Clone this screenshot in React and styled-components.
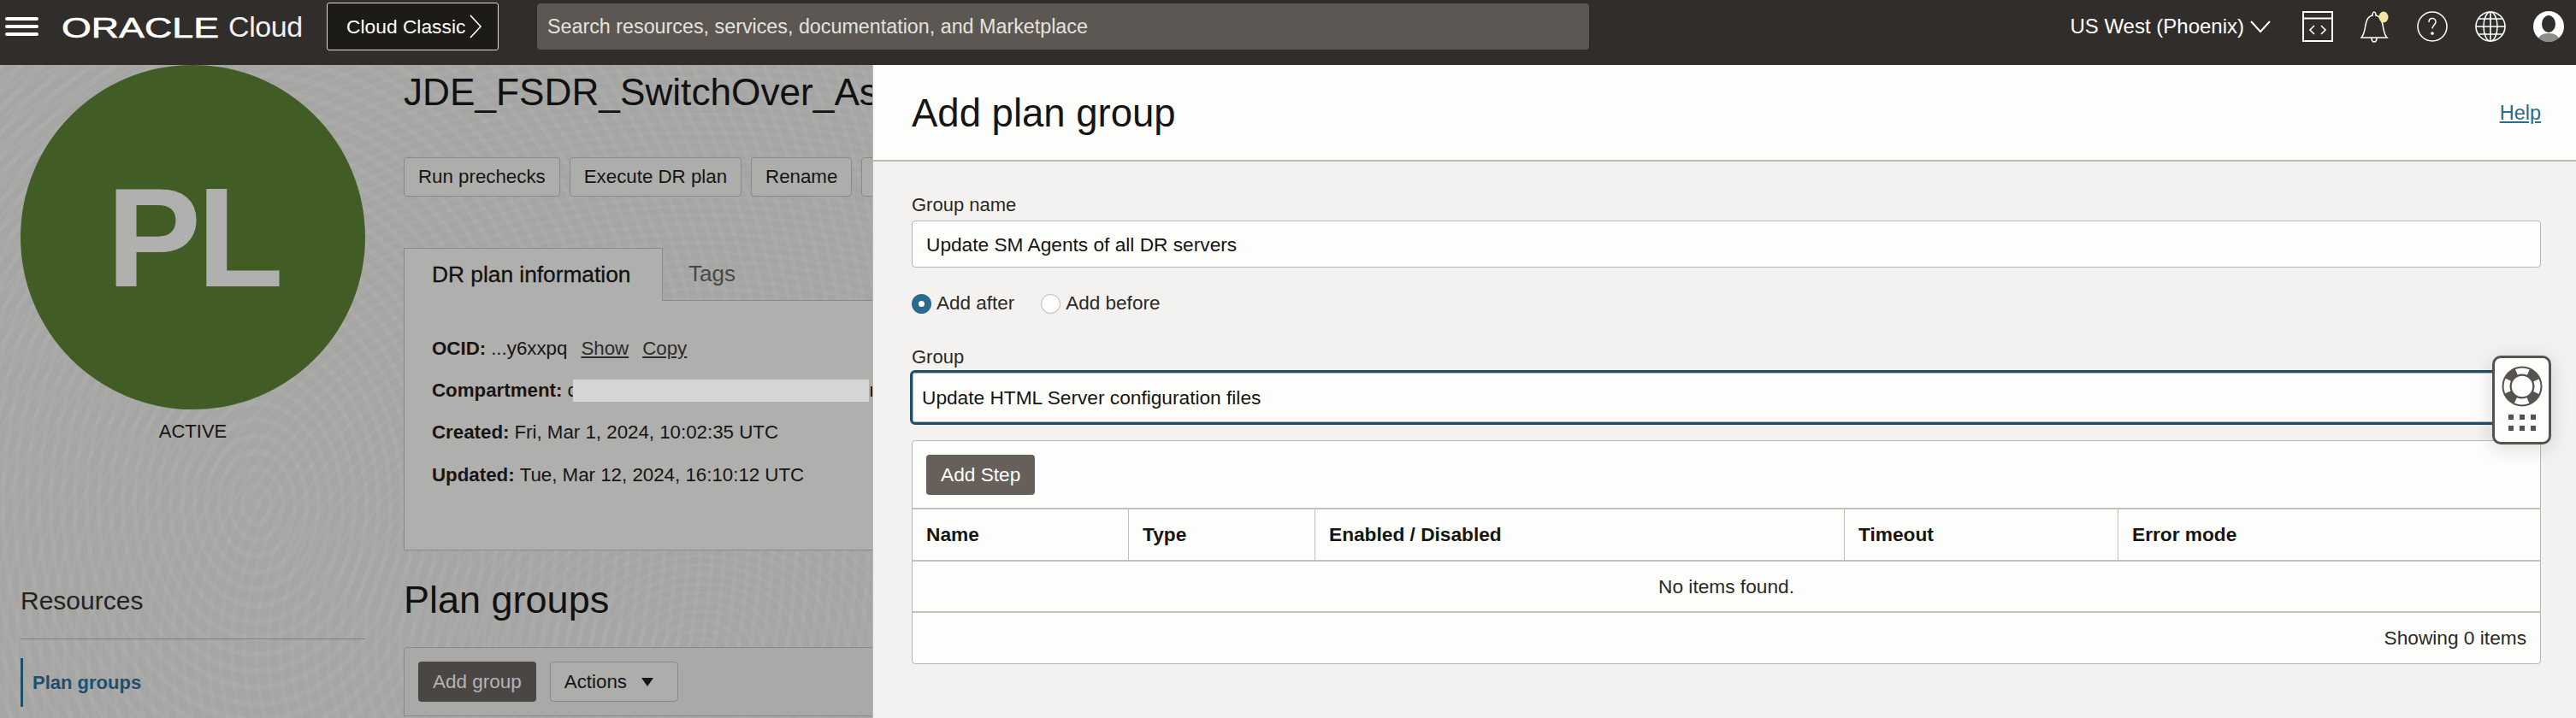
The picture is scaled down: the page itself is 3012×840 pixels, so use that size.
import React from 'react';
import styled, { createGlobalStyle } from 'styled-components';

const GlobalStyle = createGlobalStyle`
  html, body {
    margin: 0;
    padding: 0;
    width: 3012px;
    height: 840px;
    overflow: hidden;
    font-family: "Liberation Sans", Arial, sans-serif;
    font-size: 22.7px;
    color: #161513;
  }
  * { box-sizing: border-box; }
`;

const Shell = styled.div`
  position: relative;
  width: 3012px;
  height: 840px;
  overflow: hidden;
  background-color: #a9a9a7;
  background-image:
    repeating-radial-gradient(ellipse 190px 260px at 300px 590px, rgba(255,255,255,.018) 0 5px, rgba(0,0,0,.012) 5px 14px),
    repeating-radial-gradient(ellipse 260px 200px at 820px 760px, rgba(255,255,255,.015) 0 5px, rgba(0,0,0,.012) 5px 14px);
`;

/* top bar */
const TopBar = styled.header`
  display: flex;
  align-items: center;
  height: 76px;
  background: #312d2a;
  color: #fff;
  padding: 0 14px 14px 6px;
`;
const Burger = styled.div`
  display: flex;
  flex-direction: column;
  gap: 5px;
  width: 39px;
  margin-right: 27px;
  span { display: block; height: 4px; border-radius: 2px; background: #fff; }
`;
const LogoText = styled.svg`
  display: block;
  width: 184px;
  height: 30px;
  margin-right: 11px;
  overflow: visible;
  text {
    font-family: "Liberation Sans", sans-serif;
    font-size: 33px;
    fill: #fff;
    stroke: #fff;
    stroke-width: 0.6px;
  }
`;
const CloudWord = styled.span`
  font-size: 34px;
  width: 115px;
  color: #f2f2f1;
  letter-spacing: -0.4px;
`;
const ClassicButton = styled.div`
  display: flex;
  align-items: center;
  gap: 4px;
  width: 201px;
  height: 56px;
  margin-right: 45px;
  padding-left: 22px;
  font-size: 22.8px;
  background: #1c1b17;
  border: 1px solid #dedcd9;
  border-radius: 3px;
`;
const SearchBox = styled.div`
  display: flex;
  align-items: center;
  width: 1230px;
  height: 54px;
  padding-left: 12px;
  background: #5c5752;
  border-radius: 4px;
  color: #e4e2df;
  font-size: 23.3px;
`;
const RegionPicker = styled.div`
  display: flex;
  align-items: center;
  gap: 7px;
  margin-left: auto;
  margin-right: 37px;
  font-size: 24px;
`;
const IconRow = styled.div`
  display: flex;
  align-items: center;
  gap: 32px;
  svg { display: block; }
`;

/* page behind the panel */
const PageBody = styled.div`
  display: flex;
  align-items: flex-start;
  height: 764px;
`;
const Sidebar = styled.aside`
  flex: none;
  width: 472px;
  padding-left: 24px;
`;
const SideInner = styled.div`
  width: 403px;
`;
const Avatar = styled.div`
  display: flex;
  align-items: center;
  justify-content: center;
  width: 403px;
  height: 403px;
  border-radius: 50%;
  background: #415c24;
  color: #b0b0ae;
  font-size: 166px;
  font-weight: 700;
  letter-spacing: -5px;
`;
const StateLabel = styled.div`
  margin-top: 11px;
  line-height: 30px;
  text-align: center;
  font-size: 22px;
`;
const ResourcesTitle = styled.div`
  margin-top: 163px;
  padding-bottom: 24px;
  line-height: 40px;
  font-size: 30px;
  color: #252321;
  border-bottom: 1px solid #827f7c;
`;
const NavItem = styled.div`
  display: flex;
  align-items: center;
  height: 57px;
  margin-top: 22px;
  padding-left: 11px;
  border-left: 3px solid #1f4e6e;
  color: #1f4e6e;
  font-weight: 700;
  font-size: 22px;
`;
const Content = styled.main`
  flex: none;
  width: 2540px;
`;
const PageTitle = styled.h1`
  margin: 0;
  line-height: 64px;
  font-size: 44.2px;
  font-weight: 400;
  color: #111;
  white-space: nowrap;
`;
const ActionRow = styled.div`
  display: flex;
  gap: 11px;
  margin-top: 44px;
`;
const GhostButton = styled.div`
  display: flex;
  align-items: center;
  gap: 17px;
  height: ${p => p.$height || 46}px;
  min-width: ${p => p.$minWidth || 0}px;
  padding: 0 ${p => p.$padRight || 16}px 0 16px;
  background: #adadab;
  border: 1px solid #8a8987;
  border-radius: 4px;
  font-size: 22.3px;
  white-space: nowrap;
`;
const TabRow = styled.div`
  display: flex;
  align-items: stretch;
  height: 62px;
  margin-top: 60px;
`;
const ActiveTab = styled.div`
  display: flex;
  align-items: center;
  width: 303px;
  padding-left: 32px;
  font-size: 26.3px;
  color: #111;
  background: #afafad;
  border: 1px solid #8a8987;
  border-bottom: 0;
  -webkit-text-stroke: 0.3px #111;
`;
const IdleTab = styled.div`
  display: flex;
  align-items: center;
  flex: 1;
  padding-left: 30px;
  font-size: 26px;
  color: #4a4744;
  border-bottom: 1px solid #8a8987;
`;
const InfoPanel = styled.section`
  height: 292px;
  padding: 31px 0 0 32px;
  background: #afafad;
  border-left: 1px solid #8a8987;
  border-bottom: 1px solid #8a8987;
`;
const InfoRow = styled.div`
  display: flex;
  align-items: center;
  gap: 6px;
  height: 49.4px;
  font-size: 22.3px;
  white-space: nowrap;
  b { font-weight: 700; }
  u { margin-left: 10px; color: #2e2c2a; }
`;
const Redacted = styled.span`
  display: inline-block;
  width: 346px;
  height: 26px;
  margin: 0 -5px 0 -11px;
  background: #d5d5d5;
`;
const SectionTitle = styled.h2`
  margin: 26px 0 0;
  line-height: 64px;
  font-size: 45px;
  font-weight: 400;
  color: #111;
`;
const GroupsCard = styled.section`
  margin-top: 23px;
  padding: 16px;
  border: 1px solid #8a8987;
  border-radius: 4px 0 0 0;
  background: #a9a9a7;
`;
const GroupsToolbar = styled.div`
  display: flex;
  gap: 16px;
`;
const DarkButton = styled.div`
  display: flex;
  align-items: center;
  height: 47px;
  padding: 0 17px;
  border-radius: 4px;
  background: #4a4643;
  color: #b4b4b2;
  font-size: 22.5px;
`;
const Caret = styled.span`
  width: 0;
  height: 0;
  border-left: 7.5px solid transparent;
  border-right: 7.5px solid transparent;
  border-top: 10px solid #161513;
`;

/* slide-in panel */
const Panel = styled.aside`
  position: absolute;
  top: 76px;
  left: 1020px;
  right: 0;
  bottom: 0;
  background: #f3f2f0;
  border-left: 1px solid #b9b5b1;
`;
const PanelHeader = styled.div`
  display: flex;
  align-items: center;
  justify-content: space-between;
  height: 113px;
  padding: 2px 41px 0 45px;
  background: #fdfdfb;
  border-bottom: 2px solid #bfbcb8;
`;
const PanelTitle = styled.h2`
  margin: 0;
  font-size: 45.5px;
  font-weight: 400;
  color: #161513;
`;
const HelpLink = styled.a`
  font-size: 23.5px;
  color: #2a6a8f;
  text-decoration: underline;
`;
const PanelBody = styled.div`
  padding: 37px 41px 0 45px;
`;
const FieldLabel = styled.div`
  margin-top: ${p => p.$top || 0}px;
  line-height: 28px;
  font-size: 22px;
  color: #2b2927;
`;
const TextField = styled.div`
  display: flex;
  align-items: center;
  height: 55px;
  margin-top: 4px;
  padding: 2px 0 0 16px;
  background: #fdfdfb;
  border: 1px solid #b9b5b1;
  border-radius: 4px;
`;
const FocusField = styled(TextField)`
  width: 1909px;
  height: 64px;
  margin: 1px 0 0 -2px;
  padding: 0 0 0 11px;
  border: 3px solid #1d4f6b;
  box-shadow: inset 0 0 0 1px #b9b5b1;
  border-radius: 6px;
`;
const RadioRow = styled.div`
  display: flex;
  align-items: center;
  height: 28px;
  margin-top: 28px;
  font-size: 22.5px;
`;
const RadioMark = styled.span`
  flex: none;
  width: 23px;
  height: 23px;
  margin-right: 6px;
  border-radius: 50%;
  background: #fdfdfb;
  border: ${p => (p.$on ? '8px solid #2a6a8f' : '1px solid #b9b5b1')};
`;
const RadioText = styled.span`
  margin-right: 31px;
  color: #2b2927;
`;
const StepsCard = styled.section`
  margin-top: 18px;
  height: 262px;
  background: #fdfdfb;
  border: 1px solid #b9b5b1;
  border-radius: 4px;
`;
const StepsToolbar = styled.div`
  display: flex;
  align-items: center;
  height: 80px;
  padding-left: 16px;
  border-bottom: 2px solid #c4c1bd;
`;
const PrimaryButton = styled.div`
  display: flex;
  align-items: center;
  height: 47px;
  padding: 0 17px;
  border-radius: 4px;
  background: #665f5a;
  color: #fff;
`;
const HeadRow = styled.div`
  display: grid;
  grid-template-columns: 253px 218px 619px 320px 1fr;
  height: 61px;
  border-bottom: 2px solid #c4c1bd;
`;
const HeadCell = styled.div`
  display: flex;
  align-items: center;
  padding-left: 16px;
  font-weight: 700;
  border-right: ${p => (p.$last ? '0' : '1px solid #c4c1bd')};
`;
const EmptyRow = styled.div`
  display: flex;
  align-items: center;
  justify-content: center;
  height: 60px;
  border-bottom: 2px solid #c4c1bd;
  color: #2b2927;
`;
const FootRow = styled.div`
  display: flex;
  align-items: center;
  justify-content: flex-end;
  height: 59px;
  padding-right: 16px;
  color: #2b2927;
`;

/* floating helper widget */
const HelperWidget = styled.div`
  position: absolute;
  top: 416px;
  left: 2914px;
  display: flex;
  flex-direction: column;
  align-items: center;
  width: 69px;
  height: 104px;
  padding-top: 9px;
  background: #fdfdfb;
  border: 3px solid #55524f;
  border-radius: 10px;
  box-shadow: 0 4px 24px rgba(0, 0, 0, .14);
  svg { display: block; }
`;
const DotGrid = styled.div`
  display: grid;
  grid-template-columns: repeat(3, 6px);
  gap: 7px;
  margin-top: 9px;
  span { height: 6px; background: #55524f; }
`;

const CodeIcon = () => (
  <svg width="36" height="36" viewBox="0 0 36 36" fill="none" stroke="#fff" strokeWidth="2">
    <rect x="1" y="1" width="34" height="34" />
    <path d="M1 8.500h34" />
    <path d="M14 17l-5 5 5 5M22 17l5 5-5 5" strokeWidth="1.6" />
  </svg>
);
const BellIcon = () => (
  <svg width="34" height="38" viewBox="0 0 34 38" fill="none" stroke="#fff" strokeWidth="1.6">
    <path d="M1 32c3-3 4-8 5-15 1-6 3-10 8-11 0-2 1-4 2-4s2 2 2 4c5 1 7 5 8 11 1 7 2 12 5 15z" />
    <path d="M13 32c0 3 1 5 3 5s3-2 3-5" />
    <ellipse cx="27" cy="8" rx="5.500" ry="6.500" fill="#f6e3a6" stroke="none" />
  </svg>
);
const HelpIcon = () => (
  <svg width="36" height="36" viewBox="0 0 36 36" fill="none" stroke="#fff" strokeWidth="1.5">
    <circle cx="18" cy="18" r="17" />
    <path d="M14 13c0-3 2-4.500 4-4.500s4 1.500 4 4c0 3.500-4 4-4 8" />
    <circle cx="18" cy="26" r="1.100" fill="#fff" />
  </svg>
);
const GlobeIcon = () => (
  <svg width="36" height="36" viewBox="0 0 36 36" fill="none" stroke="#fff" strokeWidth="1.6">
    <circle cx="18" cy="18" r="17" />
    <ellipse cx="18" cy="18" rx="8" ry="17" />
    <path d="M18 1v34M1 18h34M4 9h28M4 27h28" />
  </svg>
);
const UserIcon = () => (
  <svg width="36" height="36" viewBox="0 0 36 36">
    <circle cx="18" cy="18" r="18" fill="#fff" />
    <ellipse cx="18" cy="15" rx="8" ry="10" fill="#312d2a" />
    <path d="M6 32c2-5 7-6 12-6s10 1 12 6c-3 3-7 4-12 4s-9-1-12-4z" fill="#312d2a" opacity=".55" />
  </svg>
);
const LifeRing = () => (
  <svg width="48" height="48" viewBox="0 0 48 48">
    <circle cx="24" cy="24" r="23.500" fill="#55524f" />
    <circle cx="24" cy="24" r="18" fill="none" stroke="#fdfdfb" strokeWidth="7" strokeDasharray="15 13.270" strokeDashoffset="7.500" transform="rotate(-90 24 24)" />
    <circle cx="24" cy="24" r="13" fill="#fdfdfb" stroke="#55524f" strokeWidth="1.500" />
  </svg>
);

const stepColumns = ['Name', 'Type', 'Enabled / Disabled', 'Timeout', 'Error mode'];

export default function App() {
  return (
    <Shell>
      <GlobalStyle />
      <TopBar>
        <Burger><span /><span /><span /></Burger>
        <LogoText viewBox="0 0 184 30">
          <text x="0" y="28" textLength="184" lengthAdjust="spacingAndGlyphs">ORACLE</text>
        </LogoText>
        <CloudWord>Cloud</CloudWord>
        <ClassicButton>
          Cloud Classic
          <svg width="16" height="30" viewBox="0 0 16 30" fill="none" stroke="#fff" strokeWidth="1.6">
            <path d="M2 2l12 13L2 28" />
          </svg>
        </ClassicButton>
        <SearchBox>Search resources, services, documentation, and Marketplace</SearchBox>
        <RegionPicker>
          US West (Phoenix)
          <svg width="24" height="16" viewBox="0 0 24 16" fill="none" stroke="#fff" strokeWidth="2">
            <path d="M1 2l11 12L23 2" />
          </svg>
        </RegionPicker>
        <IconRow>
          <CodeIcon />
          <BellIcon />
          <HelpIcon />
          <GlobeIcon />
          <UserIcon />
        </IconRow>
      </TopBar>

      <PageBody>
        <Sidebar>
          <SideInner>
            <Avatar>PL</Avatar>
            <StateLabel>ACTIVE</StateLabel>
            <ResourcesTitle>Resources</ResourcesTitle>
            <NavItem>Plan groups</NavItem>
          </SideInner>
        </Sidebar>
        <Content>
          <PageTitle>JDE_FSDR_SwitchOver_Ascend</PageTitle>
          <ActionRow>
            <GhostButton>Run prechecks</GhostButton>
            <GhostButton>Execute DR plan</GhostButton>
            <GhostButton>Rename</GhostButton>
            <GhostButton $minWidth={120} />
          </ActionRow>
          <TabRow>
            <ActiveTab>DR plan information</ActiveTab>
            <IdleTab>Tags</IdleTab>
          </TabRow>
          <InfoPanel>
            <InfoRow><b>OCID:</b> ...y6xxpq <u>Show</u> <u>Copy</u></InfoRow>
            <InfoRow><b>Compartment:</b> c<Redacted />n</InfoRow>
            <InfoRow><b>Created:</b> Fri, Mar 1, 2024, 10:02:35 UTC</InfoRow>
            <InfoRow><b>Updated:</b> Tue, Mar 12, 2024, 16:10:12 UTC</InfoRow>
          </InfoPanel>
          <SectionTitle>Plan groups</SectionTitle>
          <GroupsCard>
            <GroupsToolbar>
              <DarkButton>Add group</DarkButton>
              <GhostButton $height={47} $padRight={28}>Actions <Caret /></GhostButton>
            </GroupsToolbar>
          </GroupsCard>
        </Content>
      </PageBody>

      <Panel>
        <PanelHeader>
          <PanelTitle>Add plan group</PanelTitle>
          <HelpLink>Help</HelpLink>
        </PanelHeader>
        <PanelBody>
          <FieldLabel>Group name</FieldLabel>
          <TextField>Update SM Agents of all DR servers</TextField>
          <RadioRow>
            <RadioMark $on />
            <RadioText>Add after</RadioText>
            <RadioMark />
            <RadioText>Add before</RadioText>
          </RadioRow>
          <FieldLabel $top={35}>Group</FieldLabel>
          <FocusField>Update HTML Server configuration files</FocusField>
          <StepsCard>
            <StepsToolbar>
              <PrimaryButton>Add Step</PrimaryButton>
            </StepsToolbar>
            <HeadRow>
              {stepColumns.map((c, i) => (
                <HeadCell key={c} $last={i === stepColumns.length - 1}>{c}</HeadCell>
              ))}
            </HeadRow>
            <EmptyRow>No items found.</EmptyRow>
            <FootRow>Showing 0 items</FootRow>
          </StepsCard>
        </PanelBody>
      </Panel>

      <HelperWidget>
        <LifeRing />
        <DotGrid>
          <span /><span /><span /><span /><span /><span />
        </DotGrid>
      </HelperWidget>
    </Shell>
  );
}
